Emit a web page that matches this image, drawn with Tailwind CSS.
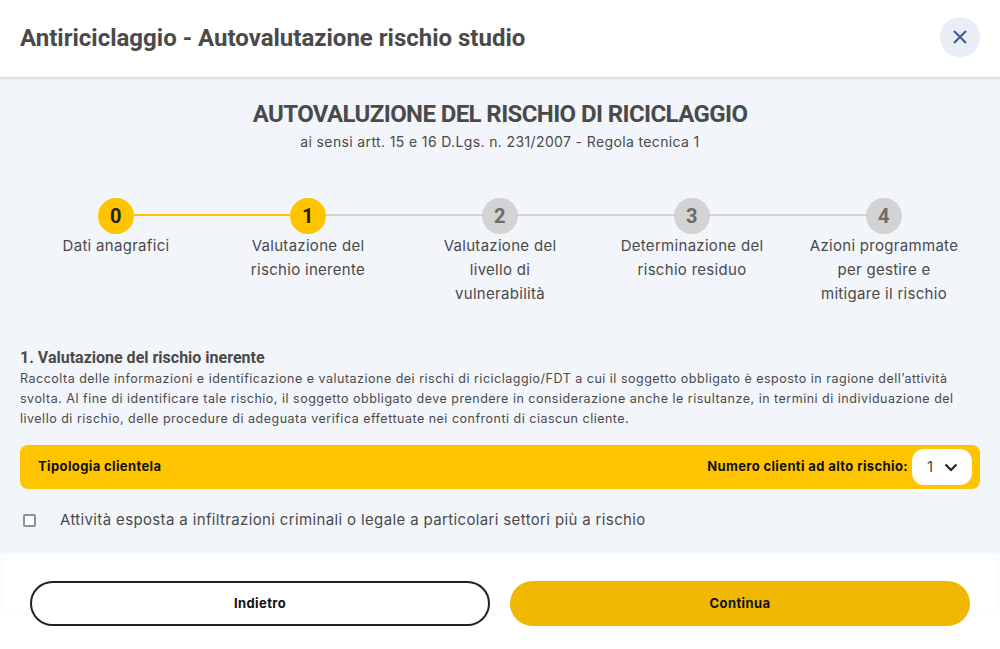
<!DOCTYPE html>
<html lang="it">
<head>
  <meta charset="UTF-8">
  <title>Antiriciclaggio</title>
  <script src="https://cdn.jsdelivr.net/npm/@tailwindcss/browser@4"></script>
</head>
<body class="bg-white font-['Inter',sans-serif] text-[#4a4a4a]">
<div class="h-[649px] w-[1000px] overflow-hidden flex flex-col">

  <!-- Header -->
  <header class="h-[77px] shrink-0 bg-white flex items-center justify-between pl-5 pr-5 shadow-[0_1px_3px_rgba(0,0,0,0.18)] relative z-10">
    <h1 class="font-['Roboto',sans-serif] font-bold text-[24px] leading-none text-[#4a4a4a] -mt-[2px]">Antiriciclaggio - Autovalutazione rischio studio</h1>
    <button class="w-10 h-10 rounded-full bg-[#e9edf5] flex items-center justify-center -mt-[3px]">
      <svg width="16" height="16" viewBox="0 0 16 16" fill="none" stroke="#3b5c94" stroke-width="2"><path d="M2 2l12 12M14 2L2 14"/></svg>
    </button>
  </header>

  <!-- Content -->
  <main class="h-[476px] shrink-0 bg-[#f2f5fa] px-5">
    <div class="text-center pt-[22px]">
      <h2 class="font-['Roboto',sans-serif] font-bold text-[24px] leading-[30px] tracking-[-0.6px]">AUTOVALUZIONE DEL RISCHIO DI RICICLAGGIO</h2>
      <p class="text-[14px] leading-[24px] mt-[1px] tracking-[0.37px]">ai sensi artt. 15 e 16 D.Lgs. n. 231/2007 - Regola tecnica 1</p>
    </div>

    <!-- Stepper -->
    <div class="grid grid-cols-5 mt-[44px] text-center text-[15px] leading-[24px] tracking-[0.3px]">
      <div class="relative flex flex-col items-center">
        <div class="absolute top-[16px] left-1/2 w-full h-[2px] bg-[#ffc400]"></div>
        <div class="relative w-9 h-9 rounded-full bg-[#ffc400] flex items-center justify-center font-['Roboto',sans-serif] font-bold text-[20px] text-[#222]">0</div>
        <p>Dati anagrafici</p>
      </div>
      <div class="relative flex flex-col items-center">
        <div class="absolute top-[16px] left-1/2 w-full h-[2px] bg-[#d3d3d3]"></div>
        <div class="relative w-9 h-9 rounded-full bg-[#ffc400] flex items-center justify-center font-['Roboto',sans-serif] font-bold text-[20px] text-[#222]">1</div>
        <p>Valutazione del<br>rischio inerente</p>
      </div>
      <div class="relative flex flex-col items-center">
        <div class="absolute top-[16px] left-1/2 w-full h-[2px] bg-[#d3d3d3]"></div>
        <div class="relative w-9 h-9 rounded-full bg-[#d3d3d3] flex items-center justify-center font-['Roboto',sans-serif] font-bold text-[20px] text-[#6b6b6b]">2</div>
        <p>Valutazione del<br>livello di<br>vulnerabilità</p>
      </div>
      <div class="relative flex flex-col items-center">
        <div class="absolute top-[16px] left-1/2 w-full h-[2px] bg-[#d3d3d3]"></div>
        <div class="relative w-9 h-9 rounded-full bg-[#d3d3d3] flex items-center justify-center font-['Roboto',sans-serif] font-bold text-[20px] text-[#6b6b6b]">3</div>
        <p>Determinazione del<br>rischio residuo</p>
      </div>
      <div class="relative flex flex-col items-center">
        <div class="relative w-9 h-9 rounded-full bg-[#d3d3d3] flex items-center justify-center font-['Roboto',sans-serif] font-bold text-[20px] text-[#6b6b6b]">4</div>
        <p>Azioni programmate<br>per gestire e<br>mitigare il rischio</p>
      </div>
    </div>

    <!-- Section -->
    <h3 class="font-['Roboto',sans-serif] font-bold text-[16px] leading-[20px] mt-[42px]">1. Valutazione del rischio inerente</h3>
    <p class="text-[12.5px] leading-[20px] mt-[1px] tracking-[0.5px] whitespace-nowrap">Raccolta delle informazioni e identificazione e valutazione dei rischi di riciclaggio/FDT a cui il soggetto obbligato è esposto in ragione dell’attività<br>svolta. Al fine di identificare tale rischio, il soggetto obbligato deve prendere in considerazione anche le risultanze, in termini di individuazione del<br>livello di rischio, delle procedure di adeguata verifica effettuate nei confronti di ciascun cliente.</p>

    <div class="mt-[16px] h-11 rounded-[8px] bg-[#ffc400] flex items-center justify-between pl-[18px] pr-2 text-[13px] font-bold text-[#111] tracking-[0.38px]">
      <span>Tipologia clientela</span>
      <div class="flex items-center gap-1">
        <span>Numero clienti ad alto rischio:</span>
        <div class="w-[60px] h-9 rounded-[12px] bg-white flex items-center pl-[15px] gap-[11px]">
          <span class="font-normal text-[15px] text-[#4a4a4a]">1</span>
          <svg width="14" height="9" viewBox="0 0 14 9" fill="none" stroke="#222" stroke-width="2.2"><path d="M1.5 1.5L7 7l5.5-5.5"/></svg>
        </div>
      </div>
    </div>

    <label class="flex items-center mt-[19px] pl-[3px] text-[15px] leading-[24px] tracking-[0.36px]">
      <span class="w-[13px] h-[13px] rounded-[2px] border-2 border-[#8f8fa3] bg-white shrink-0"></span>
      <span class="ml-[24px]">Attività esposta a infiltrazioni criminali o legale a particolari settori più a rischio</span>
    </label>
  </main>

  <!-- Footer -->
  <footer class="h-[62px] shrink-0 bg-white grid grid-cols-2 gap-5 px-[30px] pt-[28px] items-start text-[13px] font-bold text-[#111] tracking-[0.4px] shadow-[inset_0_0_6px_rgba(0,0,0,0.03)]">
    <button class="h-[45px] rounded-full border-2 border-[#222] bg-white">Indietro</button>
    <button class="h-[45px] rounded-full bg-[#f0b800]">Continua</button>
  </footer>
</div>
</body>
</html>
